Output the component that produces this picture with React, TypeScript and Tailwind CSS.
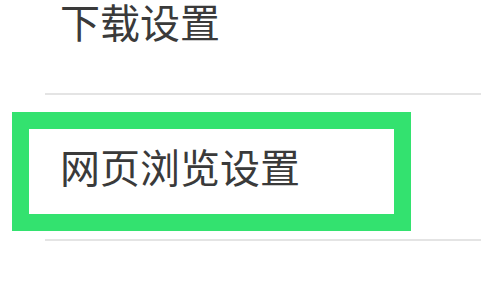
export default function App() {
  return (
    <div
      className="w-[481px] h-[291px] bg-white overflow-hidden flex flex-col"
      style={{ fontFamily: '"Noto Sans CJK SC", "Noto Sans", sans-serif' }}
    >
      {/* download settings row */}
      <div className="mt-[1px] pl-[60px] h-10 text-[40px] leading-10 text-[#3a3a3a]">下载设置</div>
      <div className="mt-[52px] ml-[45px] h-[2px] bg-[#e4e4e4]" />

      {/* highlighted row */}
      <div className="mt-[17px] ml-[12px] w-[399px] h-[119px] border-[17px] border-[#33e26f] pl-[31px] pt-[17px]">
        <div className="h-10 text-[40px] leading-10 text-[#3a3a3a]">网页浏览设置</div>
      </div>
      <div className="mt-[8px] ml-[45px] h-[2px] bg-[#e4e4e4]" />
    </div>
  );
}
